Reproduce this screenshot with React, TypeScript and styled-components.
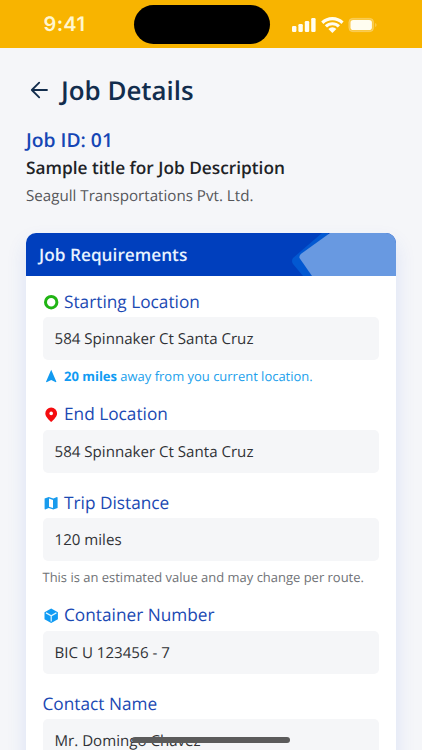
import React from "react";
import styled, { createGlobalStyle } from "styled-components";

const GlobalStyle = createGlobalStyle`
  * { box-sizing: border-box; }
  html, body { margin: 0; padding: 0; overflow: hidden; }
  body {
    background: #f5f6f9;
    font-family: "Open Sans", "Noto Sans", sans-serif;
    text-rendering: geometricPrecision;
  }
`;

const Screen = styled.main`
  position: relative;
  display: flex;
  flex-direction: column;
  width: 422px;
  height: 750px;
  overflow: hidden;
  background: #f5f6f9;
`;

const StatusBar = styled.header`
  display: grid;
  grid-template-columns: 134px 136px 152px;
  flex: none;
  height: 48px;
  background: #f8b400;
`;

const Clock = styled.time`
  padding-left: 43.5px;
  font: 600 20px/49px Inter, sans-serif;
  letter-spacing: 0.35px;
  color: #fff6cf;
`;

const Island = styled.div`
  height: 39px;
  margin-top: 5px;
  border-radius: 20px;
  background: #000;
`;

const Indicators = styled.div`
  display: flex;
  padding: 15px 0 0 21px;
`;

const TitleRow = styled.div`
  display: flex;
  align-items: center;
  height: 40px;
  margin-top: 22px;
  padding-left: 27px;
  gap: 10px;
`;

const Title = styled.h1`
  margin: 0;
  font-size: 25.9px;
  font-weight: 600;
  line-height: 40px;
  color: #122d4d;
`;

const Summary = styled.section`
  display: flex;
  flex-direction: column;
  margin-top: 16px;
  padding-left: 26px;
`;

const JobId = styled.div`
  font-size: 19.3px;
  font-weight: 600;
  line-height: 28px;
  color: #1546b5;
`;

const JobTitle = styled.div`
  height: 28px;
  font-size: 17.25px;
  font-weight: 600;
  line-height: 30px;
  color: #202226;
`;

const Company = styled.div`
  font-size: 15.15px;
  line-height: 29px;
  height: 28px;
  color: #55575b;
`;

const Card = styled.section`
  display: flex;
  flex-direction: column;
  flex: none;
  width: 370px;
  height: 560px;
  margin: 23px 0 0 26px;
  border-radius: 10px;
  background: #fff;
  box-shadow: 0 10px 20px rgba(50, 95, 215, 0.13);
`;

const CardHeader = styled.div`
  display: flex;
  justify-content: space-between;
  flex: none;
  height: 43px;
  padding-left: 13px;
  overflow: hidden;
  border-radius: 10px 10px 0 0;
  background: #003fbd;
`;

const CardTitle = styled.h2`
  margin: 0;
  font-size: 17.25px;
  font-weight: 600;
  line-height: 45px;
  color: #e8f2ff;
`;

const Fields = styled.div`
  display: flex;
  flex-direction: column;
  padding: 10px 17px 0 16.5px;
`;

const Field = styled.div<{ $gap: number }>`
  display: flex;
  flex-direction: column;
  margin-bottom: ${(p) => p.$gap}px;
`;

const Label = styled.div`
  display: flex;
  align-items: center;
  height: 31px;
  padding-top: 2px;
  font-size: 17.25px;
  line-height: 24px;
  color: #1b49b3;
`;

const IconSlot = styled.span`
  display: flex;
  width: 21.5px;
  flex: none;
`;

const Value = styled.div`
  height: 43px;
  padding-left: 12px;
  border-radius: 5px;
  background: #f5f6f8;
  font-size: 15.1px;
  line-height: 44.5px;
  color: #303236;
`;

const Help = styled.div<{ $accent?: boolean }>`
  display: flex;
  align-items: center;
  height: 32px;
  padding-bottom: 1px;
  font-size: 12.98px;
  white-space: pre;
  color: ${(p) => (p.$accent ? "#219fec" : "#707276")};
`;

const Strong = styled.b`
  font-weight: 700;
  color: #109bf3;
`;

const HomeIndicator = styled.div`
  position: absolute;
  left: 132px;
  top: 737px;
  width: 158px;
  height: 6px;
  border-radius: 3px;
  background: #5b5b5b;
`;

const SystemIcons = () => (
  <svg width="90" height="20" viewBox="0 0 90 20" fill="#fffdf0">
    <rect x="1" y="11" width="4.4" height="6" rx="1.2" />
    <rect x="7.4" y="9" width="4.4" height="8" rx="1.2" />
    <rect x="13.8" y="6" width="4.4" height="11" rx="1.2" />
    <rect x="20.2" y="3" width="4.4" height="14" rx="1.2" />
    <path d="M30.2 6.6a16 16 0 0 1 22.4 0l-2.2 2.3a12.8 12.8 0 0 0-18 0z" />
    <path d="M33.8 10.3a10.8 10.8 0 0 1 15.2 0l-2.2 2.3a7.6 7.6 0 0 0-10.8 0z" />
    <path d="M37.4 14a5.7 5.7 0 0 1 8 0l-4 4z" />
    <rect x="57.8" y="3.3" width="24.8" height="13.4" rx="4" fill="#fff" fillOpacity=".25" stroke="#fff" strokeOpacity=".2" />
    <rect x="59.5" y="5" width="21.4" height="10" rx="2.8" />
    <path d="M84.2 8c1.8.8 1.8 3.2 0 4z" opacity=".35" />
  </svg>
);

const BackArrow = () => (
  <svg width="24" height="24" viewBox="0 0 24 24" fill="none" stroke="#122d4d" strokeWidth="1.8" strokeLinecap="round" strokeLinejoin="round">
    <path d="M20 12H4.8M12.2 4.6 4.8 12l7.4 7.4" />
  </svg>
);

const HeaderShape = () => (
  <svg width="108" height="43" viewBox="0 0 108 43">
    <path d="M34 0 5 25Q3 28 5 31L15 43H40V0z" fill="#0258d1" />
    <path d="M42 0H108V43H24L11.5 25Q10.8 22.5 13.5 20.5z" fill="#6899e1" />
  </svg>
);

const StartIcon = () => (
  <svg width="16" height="15" viewBox="0 0 16 15">
    <circle cx="8.2" cy="7.2" r="5.7" fill="none" stroke="#20b414" strokeWidth="3" />
  </svg>
);

const NavigateIcon = () => (
  <svg width="16" height="14" viewBox="0 0 16 14">
    <path d="M8.2.8 3 12.7l.5.5 4.7-2.2 4.7 2.2.5-.5z" fill="#129af0" />
  </svg>
);

const PinIcon = () => (
  <svg width="16" height="16" viewBox="0 0 16 16">
    <path d="M8.2.6A5.9 5.9 0 0 0 2.3 6.5C2.3 10.2 8.2 15 8.2 15S14.1 10.2 14.1 6.5A5.9 5.9 0 0 0 8.2.6z" fill="#f40d10" />
    <circle cx="8.2" cy="6.4" r="1.8" fill="#fff" />
  </svg>
);

const MapIcon = () => (
  <svg width="16" height="15" viewBox="0 0 16 15">
    <path d="M1.6 2.5 5.8.9l4.6 1.5L13.9 1q.7 0 .7.6v10.3l-4.3 1.7L5.7 12l-3.5 1.4q-.6 0-.6-.6z" fill="#189bed" />
    <path d="M6 2.5v8.2l4 1.4V3.9z" fill="#fff" />
  </svg>
);

const CubeIcon = () => (
  <svg width="16" height="16" viewBox="0 0 16 16">
    <path d="M8.2.5 14.9 4.2v7L8.2 14.9 1.5 11.2v-7z" fill="#109bf4" />
    <path d="M3 4.9 8.2 7.7l5.2-2.8M8.2 7.7v5.7" fill="none" stroke="#e0f6ff" strokeWidth="1.2" />
  </svg>
);

interface FieldData {
  label: string;
  value: string;
  gap: number;
  icon?: React.ReactNode;
  help?: React.ReactNode;
}

const fields: FieldData[] = [
  {
    label: "Starting Location",
    value: "584 Spinnaker Ct Santa Cruz",
    gap: 6.5,
    icon: <StartIcon />,
    help: (
      <Help $accent>
        <IconSlot><NavigateIcon /></IconSlot>
        <Strong>20 miles</Strong> away from you current location.
      </Help>
    ),
  },
  { label: "End Location", value: "584 Spinnaker Ct Santa Cruz", gap: 14.5, icon: <PinIcon /> },
  {
    label: "Trip Distance",
    value: "120 miles",
    gap: 6.5,
    icon: <MapIcon />,
    help: <Help>This is an estimated value and may change per route.</Help>,
  },
  { label: "Container Number", value: "BIC U 123456 - 7", gap: 14.5, icon: <CubeIcon /> },
  { label: "Contact Name", value: "Mr. Domingo Chavez", gap: 0 },
];

export default function App() {
  return (
    <Screen>
      <GlobalStyle />
      <StatusBar>
        <Clock>9:41</Clock>
        <Island />
        <Indicators><SystemIcons /></Indicators>
      </StatusBar>
      <TitleRow>
        <BackArrow />
        <Title>Job Details</Title>
      </TitleRow>
      <Summary>
        <JobId>Job ID: 01</JobId>
        <JobTitle>Sample title for Job Description</JobTitle>
        <Company>Seagull Transportations Pvt. Ltd.</Company>
      </Summary>
      <Card>
        <CardHeader>
          <CardTitle>Job Requirements</CardTitle>
          <HeaderShape />
        </CardHeader>
        <Fields>
          {fields.map((f) => (
            <Field key={f.label} $gap={f.gap}>
              <Label>
                {f.icon && <IconSlot>{f.icon}</IconSlot>}
                {f.label}
              </Label>
              <Value>{f.value}</Value>
              {f.help}
            </Field>
          ))}
        </Fields>
      </Card>
      <HomeIndicator />
    </Screen>
  );
}
